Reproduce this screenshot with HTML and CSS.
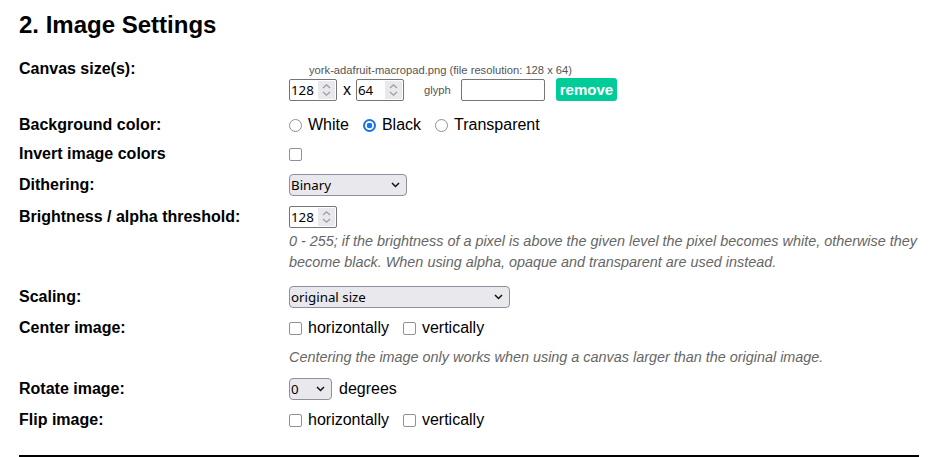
FILE: index.html
```html
<!DOCTYPE html>
<html>
<head>
<meta charset="utf-8">
<link rel="stylesheet" href="styles.css">
</head>
<body>
<div class="page">
  <h2 class="title">2. Image Settings</h2>
  <div class="rows">
    <div class="row row-canvas">
      <div class="label">Canvas size(s):</div>
      <div class="ctrl">
        <div class="filename">york-adafruit-macropad.png (file resolution: 128 x 64)</div>
        <div class="sizes">
          <span class="num-box"><input class="num" type="text" value="128"><span class="spin"><svg width="9" height="14" viewBox="0 0 9 14"><path d="M1 5 L4.5 1.8 L8 5 M1 9 L4.5 12.2 L8 9" fill="none" stroke="#9a9aa2" stroke-width="1.2"/></svg></span></span>
          <span class="times">x</span>
          <span class="num-box"><input class="num" type="text" value="64"><span class="spin"><svg width="9" height="14" viewBox="0 0 9 14"><path d="M1 5 L4.5 1.8 L8 5 M1 9 L4.5 12.2 L8 9" fill="none" stroke="#9a9aa2" stroke-width="1.2"/></svg></span></span>
          <span class="glyph-label">glyph</span>
          <input class="glyph" type="text">
          <button class="remove">remove</button>
        </div>
      </div>
    </div>
    <div class="row">
      <div class="label">Background color:</div>
      <div class="ctrl line">
        <label class="opt"><input type="radio" name="bg">White</label>
        <label class="opt"><input type="radio" name="bg" checked>Black</label>
        <label class="opt"><input type="radio" name="bg">Transparent</label>
      </div>
    </div>
    <div class="row row-tight">
      <div class="label">Invert image colors</div>
      <div class="ctrl line"><input type="checkbox" class="box solo"></div>
    </div>
    <div class="row">
      <div class="label">Dithering:</div>
      <div class="ctrl line">
        <span class="sel-wrap"><select class="sel sel-dither"><option>Binary</option></select><svg class="chev" width="9" height="6" viewBox="0 0 9 6"><path d="M1 1 L4.5 4.5 L8 1" fill="none" stroke="#111" stroke-width="1.5"/></svg></span>
      </div>
    </div>
    <div class="row row-bright">
      <div class="label">Brightness / alpha threshold:</div>
      <div class="ctrl">
        <div class="line"><span class="num-box"><input class="num" type="text" value="128"><span class="spin"><svg width="9" height="14" viewBox="0 0 9 14"><path d="M1 5 L4.5 1.8 L8 5 M1 9 L4.5 12.2 L8 9" fill="none" stroke="#9a9aa2" stroke-width="1.2"/></svg></span></span></div>
        <p class="note note-bright">0 - 255; if the brightness of a pixel is above the given level the pixel becomes white, otherwise they become black. When using alpha, opaque and transparent are used instead.</p>
      </div>
    </div>
    <div class="row">
      <div class="label">Scaling:</div>
      <div class="ctrl line">
        <span class="sel-wrap"><select class="sel sel-scale"><option>original size</option></select><svg class="chev" width="9" height="6" viewBox="0 0 9 6"><path d="M1 1 L4.5 4.5 L8 1" fill="none" stroke="#111" stroke-width="1.5"/></svg></span>
      </div>
    </div>
    <div class="row row-center">
      <div class="label">Center image:</div>
      <div class="ctrl">
        <div class="line">
          <label class="opt"><input type="checkbox" class="box">horizontally</label>
          <label class="opt"><input type="checkbox" class="box">vertically</label>
        </div>
        <p class="note note-center">Centering the image only works when using a canvas larger than the original image.</p>
      </div>
    </div>
    <div class="row">
      <div class="label">Rotate image:</div>
      <div class="ctrl line">
        <span class="sel-wrap"><select class="sel sel-rot"><option>0</option></select><svg class="chev" width="9" height="6" viewBox="0 0 9 6"><path d="M1 1 L4.5 4.5 L8 1" fill="none" stroke="#111" stroke-width="1.5"/></svg></span>
        <span class="deg">degrees</span>
      </div>
    </div>
    <div class="row">
      <div class="label">Flip image:</div>
      <div class="ctrl line">
        <label class="opt"><input type="checkbox" class="box">horizontally</label>
        <label class="opt"><input type="checkbox" class="box">vertically</label>
      </div>
    </div>
  </div>
  <div class="rule"></div>
</div>
</body>
</html>
```
FILE: styles.css
```css
html, body {
  margin: 0;
  padding: 0;
  background: #fff;
}
body {
  font-family: "Liberation Sans", Arial, sans-serif;
  font-size: 16px;
  color: #000;
}
.page {
  width: 900px;
  padding: 0 0 0 19px;
}
.title {
  font-size: 24px;
  line-height: 28px;
  font-weight: bold;
  margin: 11px 0 14px 0;
}
.row {
  display: grid;
  grid-template-columns: 270px 1fr;
  padding: 4.5px 0;
}
.row-canvas {
  padding-bottom: 9px;
}
.row-tight {
  padding-top: 2.5px;
}
.row-bright {
  padding-top: 5.5px;
  padding-bottom: 8.5px;
}
.row-center {
  padding-bottom: 5.5px;
}
.label {
  font-weight: bold;
  line-height: 22px;
}
.ctrl {
  line-height: 22px;
}
.line {
  display: flex;
  align-items: center;
  height: 22px;
}
.filename {
  font-size: 0.7em;
  line-height: 14px;
  color: #555;
  margin: 5px 0 2px 20px;
}
.sizes {
  display: flex;
  align-items: center;
  height: 22px;
}
.num-box {
  box-sizing: border-box;
  display: inline-flex;
  align-items: stretch;
  width: 48px;
  height: 22px;
  border: 1px solid #767676;
  border-radius: 2px;
  background: #fff;
}
input.num {
  flex: 1;
  min-width: 0;
  margin: 0;
  padding: 0 0 0 1px;
  border: none;
  outline: none;
  background: transparent;
  font-family: "Noto Sans", sans-serif;
  font-size: 13.33px;
  color: #000;
}
.spin {
  width: 17px;
  margin: 1px 1px 1px 0;
  background: #e9e9ed;
  display: flex;
  align-items: center;
  justify-content: center;
}
.spin svg {
  display: block;
}
.times {
  margin: 0 5px 0 6px;
}
.glyph-label {
  font-size: 0.7em;
  color: #555;
  margin: 0 10px 0 20px;
}
input.glyph {
  box-sizing: border-box;
  width: 84px;
  height: 22px;
  margin: 0;
  border: 1px solid #767676;
  border-radius: 2px;
}
.remove {
  margin-left: 11px;
  height: 23px;
  padding: 0 4px;
  border: none;
  border-radius: 3px;
  background: #00cc99;
  color: #fff;
  font-family: "Liberation Sans", Arial, sans-serif;
  font-weight: bold;
  font-size: 15px;
  line-height: 23px;
}
.opt {
  display: inline-flex;
  align-items: center;
  margin-right: 14px;
}
.opt input {
  margin: 0 6px 0 0;
}
input[type="radio"] {
  appearance: none;
  -webkit-appearance: none;
  box-sizing: border-box;
  width: 13px;
  height: 13px;
  border: 1.5px solid #8f8f9d;
  border-radius: 50%;
  background: #fff;
}
input[type="radio"]:checked {
  border: 2px solid #1a73e8;
  background: radial-gradient(circle, #1a73e8 0 2.6px, #fff 3.1px);
}
input.box {
  appearance: none;
  -webkit-appearance: none;
  box-sizing: border-box;
  width: 13px;
  height: 13px;
  border: 1.7px solid #8f8f9d;
  border-radius: 2px;
  background: #fff;
}
.solo {
  margin: 0;
}
.sel-wrap {
  position: relative;
  display: inline-block;
  height: 22px;
}
.sel {
  appearance: none;
  -webkit-appearance: none;
  box-sizing: border-box;
  height: 22px;
  margin: 0;
  padding: 0 0 0 1px;
  border: 1px solid #8f8f9d;
  border-radius: 4px;
  background: #e9e9ed;
  color: #000;
  font-family: "Noto Sans", sans-serif;
  font-size: 13.33px;
  display: block;
}
.chev {
  position: absolute;
  right: 7px;
  top: 8px;
  pointer-events: none;
}
.sel-dither { width: 118px; }
.sel-scale { width: 221px; }
.sel-rot { width: 43px; }
.deg {
  margin-left: 7px;
}
.note {
  margin: 0;
  font-size: 0.9em;
  line-height: 21px;
  font-style: italic;
  color: #666;
}
.note-bright {
  margin-top: 3px;
}
.note-center {
  margin-top: 8px;
}
.rule {
  margin-top: 19px;
  border-top: 3px solid #000;
}
```
